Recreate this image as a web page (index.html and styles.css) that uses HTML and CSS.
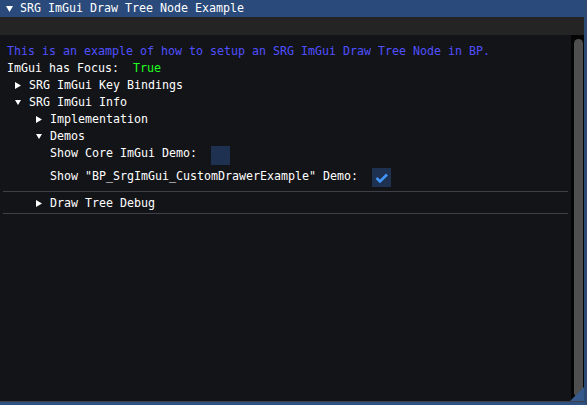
FILE: index.html
```html
<!DOCTYPE html>
<html>
<head>
<meta charset="utf-8">
<link rel="stylesheet" href="styles.css">
</head>
<body>
<div class="win">
  <div class="title">
    <svg class="ttri" width="7" height="6" viewBox="0 0 7 6"><polygon points="0,0 7,0 3.5,6" fill="#fff"/></svg>
    <span>SRG ImGui Draw Tree Node Example</span>
  </div>
  <div class="menubar"></div>
  <div class="main">
    <div class="content">
      <div class="row blue">This is an example of how to setup an SRG ImGui Draw Tree Node in BP.</div>
      <div class="row">ImGui has Focus:&nbsp;&nbsp;<span class="green">True</span></div>
      <div class="row l1"><span class="arr"><svg width="6" height="7" viewBox="0 0 6 7"><polygon points="0,0 6,3.5 0,7" fill="#fff"/></svg></span>SRG ImGui Key Bindings</div>
      <div class="row l1"><span class="arr"><svg width="6" height="5" viewBox="0 0 6 5"><polygon points="0,0 6,0 3,5" fill="#fff"/></svg></span>SRG ImGui Info</div>
      <div class="row l2"><span class="arr"><svg width="6" height="7" viewBox="0 0 6 7"><polygon points="0,0 6,3.5 0,7" fill="#fff"/></svg></span>Implementation</div>
      <div class="row l2"><span class="arr"><svg width="6" height="5" viewBox="0 0 6 5"><polygon points="0,0 6,0 3,5" fill="#fff"/></svg></span>Demos</div>
      <div class="crow first l3"><span class="ctext">Show Core ImGui Demo:</span><span class="check"></span></div>
      <div class="crow l3"><span class="ctext">Show "BP_SrgImGui_CustomDrawerExample" Demo:</span><span class="check on"><svg width="19" height="19" viewBox="0 0 19 19"><polyline points="4.5,10 8,13.5 15,6.5" fill="none" stroke="#4296fa" stroke-width="2.6"/></svg></span></div>
      <div class="sep"></div>
      <div class="row l2 dbg"><span class="arr"><svg width="6" height="7" viewBox="0 0 6 7"><polygon points="0,0 6,3.5 0,7" fill="#fff"/></svg></span>Draw Tree Debug</div>
      <div class="sep s2"></div>
    </div>
    <div class="scrollbar"><div class="grab"></div></div>
    <svg class="grip" width="14" height="14" viewBox="0 0 14 14"><polygon points="14,0 14,14 0,14" fill="#35598a"/></svg>
  </div>
  <div class="bline"></div>
</div>
</body>
</html>
```

FILE: styles.css
```css
html, body {
  margin: 0;
  padding: 0;
  background: #131418;
}
body {
  font-family: "DejaVu Sans Mono", "Liberation Mono", monospace;
  font-size: 11.63px;
  color: #ffffff;
}
.win {
  width: 587px;
  height: 405px;
  box-sizing: border-box;
  border-right: 3px solid #2c4a72;
  border-bottom: 3px solid #2f5282;
  display: flex;
  flex-direction: column;
  overflow: hidden;
}
.title {
  height: 17px;
  flex: none;
  background: #294a7a;
  display: flex;
  align-items: center;
  line-height: 17px;
  white-space: pre;
}
.ttri {
  margin-left: 6px;
  margin-right: 7px;
  flex: none;
}
.menubar {
  height: 18px;
  flex: none;
  background: #242424;
}
.main {
  flex: 1;
  display: flex;
  position: relative;
  background: #131418;
  min-height: 0;
}
.content {
  flex: 1;
  padding: 8px 0 0 7px;
}
.row {
  height: 17px;
  line-height: 17px;
  display: flex;
  align-items: center;
  white-space: pre;
}
.blue { color: #5050ff; }
.green { color: #1fff1f; }
.l1 { padding-left: 8px; }
.l2 { padding-left: 29px; }
.l3 { padding-left: 43px; }
.arr {
  width: 14px;
  flex: none;
  display: flex;
  align-items: center;
}
.arr svg { display: block; }
.crow {
  display: flex;
  align-items: flex-start;
  height: 19px;
}
.crow.first {
  height: 23px;
}
.crow.first .check { margin-top: 1px; }
.ctext {
  line-height: 17px;
  white-space: pre;
}
.check {
  width: 19px;
  height: 19px;
  background: #1f3150;
  margin-left: 14px;
  flex: none;
}
.check svg { display: block; }
.sep {
  height: 1px;
  background: #3f3f47;
  margin: 4px 3px 0 -4px;
}
.dbg { margin-top: 3px; }
.sep.s2 { margin-top: 1px; }
.scrollbar {
  width: 13px;
  background: #050506;
  flex: none;
  padding: 4px 1px 4px 3px;
  box-sizing: border-box;
}
.grab {
  height: 100%;
  background: #4f4f4f;
  border-radius: 5px;
}
.grip {
  position: absolute;
  right: 0;
  bottom: 0;
}
.bline {
  height: 1px;
  flex: none;
  background: #3c3f48;
}
```
